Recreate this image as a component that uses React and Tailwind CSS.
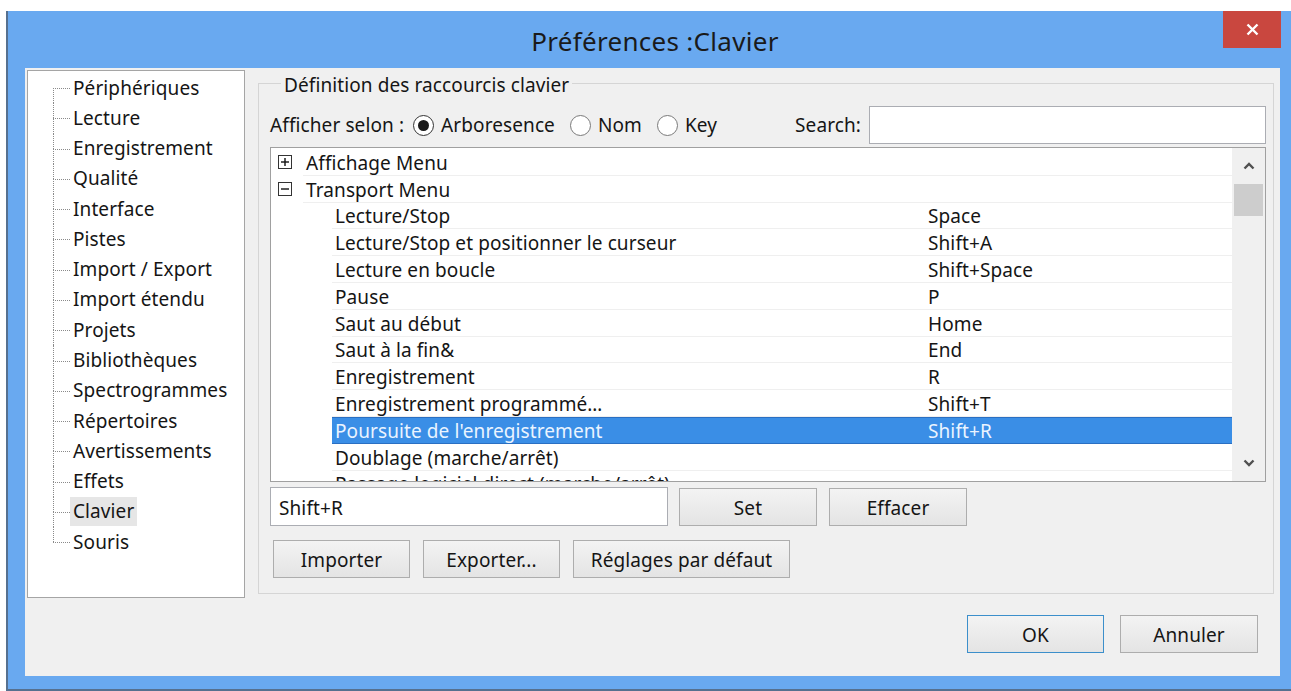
import React from "react";

const sections = [
  "Périphériques",
  "Lecture",
  "Enregistrement",
  "Qualité",
  "Interface",
  "Pistes",
  "Import / Export",
  "Import étendu",
  "Projets",
  "Bibliothèques",
  "Spectrogrammes",
  "Répertoires",
  "Avertissements",
  "Effets",
  "Clavier",
  "Souris",
];

const commands = [
  { type: "group", name: "Affichage Menu", open: false },
  { type: "group", name: "Transport Menu", open: true },
  { name: "Lecture/Stop", key: "Space" },
  { name: "Lecture/Stop et positionner le curseur", key: "Shift+A" },
  { name: "Lecture en boucle", key: "Shift+Space" },
  { name: "Pause", key: "P" },
  { name: "Saut au début", key: "Home" },
  { name: "Saut à la fin&", key: "End" },
  { name: "Enregistrement", key: "R" },
  { name: "Enregistrement programmé…", key: "Shift+T" },
  { name: "Poursuite de l'enregistrement", key: "Shift+R", selected: true },
  { name: "Doublage (marche/arrêt)", key: "" },
  { name: "Passage logiciel direct (marche/arrêt)", key: "" },
];

// expand / collapse box of the command tree
const ToggleBox = ({ open }) => (
  <svg width="14" height="14" viewBox="0 0 14 14" className="shrink-0">
    <rect x="0.5" y="0.5" width="13" height="13" fill="white" stroke="#333" />
    <line x1="3" y1="7" x2="11" y2="7" stroke="#111" strokeWidth="1.4" />
    {!open && <line x1="7" y1="3" x2="7" y2="11" stroke="#111" strokeWidth="1.4" />}
  </svg>
);

const Radio = ({ checked, label }) => (
  <label className="flex items-center gap-[7px]">
    <span
      className={
        "w-[21px] h-[21px] rounded-full border bg-white flex items-center justify-center " +
        (checked ? "border-[#333]" : "border-[#7a7a7a]")
      }
    >
      {checked && <span className="w-[11px] h-[11px] rounded-full bg-[#1a1a1a]" />}
    </span>
    <span>{label}</span>
  </label>
);

const Button = ({ children, className = "", focused = false }) => (
  <button
    className={
      "h-[38px] pt-[3px] border bg-gradient-to-b from-[#f3f3f3] to-[#e4e4e4] text-[#151515] " +
      (focused ? "border-[#3c8fcb] " : "border-[#adadad] ") +
      className
    }
  >
    {children}
  </button>
);

const Chevron = ({ down }) => (
  <svg width="12" height="8" viewBox="0 0 12 8">
    <path
      d={down ? "M1.5 1.5 L6 6 L10.5 1.5" : "M1.5 6.5 L6 2 L10.5 6.5"}
      fill="none"
      stroke="#505050"
      strokeWidth="2.4"
    />
  </svg>
);

export default function App() {
  return (
    <div className="h-[691px] overflow-hidden bg-white pt-[11px] pl-[6px] font-['Noto_Sans',sans-serif] text-[19px] tracking-[0.1px] leading-none text-[#151515]">
      <div className="w-[1290px] h-[680px] flex flex-col bg-[#69a9f0] border-l-2 border-b-2 border-[#56708f]">
        {/* Title bar */}
        <div className="relative h-[57px] shrink-0 flex items-center justify-center pl-[6px] pt-[2px]">
          <span className="text-[26px] tracking-[0.3px] text-[#1a1a1a]">Préférences :Clavier</span>
          <button className="absolute top-0 right-[15px] w-[58px] h-[37px] bg-[#c9473f] flex items-center justify-center">
            <svg width="13" height="13" viewBox="0 0 13 13">
              <path d="M1.5 1.5 L11.5 11.5 M11.5 1.5 L1.5 11.5" stroke="white" strokeWidth="2.4" />
            </svg>
          </button>
        </div>

        {/* Client area */}
        <div className="ml-[17px] w-[1255px] h-[608px] bg-[#f0f0f0] flex flex-col">
          <div className="flex items-start pt-[2px] pl-[2px]">
            {/* Section tree */}
            <div className="w-[218px] h-[528px] bg-white border border-[#a5a5a5] pt-[2px] pl-[25px]">
              {sections.map((s, i) => (
                <div key={s} className="flex h-[30.27px] items-stretch">
                  <div className="w-[17px] flex flex-col">
                    <div className={"h-1/2 " + (i > 0 ? "border-l border-dotted border-[#8a8a8a]" : "")} />
                    <div
                      className={
                        "h-1/2 border-t border-dotted border-[#8a8a8a] " +
                        (i < sections.length - 1 ? "border-l" : "")
                      }
                    />
                  </div>
                  <div className="flex items-center">
                    <span
                      className={
                        "px-[3px] h-[29px] flex items-center " + (s === "Clavier" ? "bg-[#e6e6e6]" : "")
                      }
                    >
                      {s}
                    </span>
                  </div>
                </div>
              ))}
            </div>

            {/* Shortcut editor */}
            <fieldset className="ml-[13px] w-[1016px] h-[524px] border border-[#d5d5d5] pl-[11px] pr-[7px] pt-[9px]">
              <legend className="ml-[11px] px-[3px] pt-[4px] leading-[23px]">Définition des raccourcis clavier</legend>

              <div className="flex items-center justify-between h-[38px]">
                <div className="flex items-center gap-[15px]">
                  <span className="mr-[-6px]">Afficher selon :</span>
                  <Radio checked label="Arboresence" />
                  <Radio label="Nom" />
                  <Radio label="Key" />
                </div>
                <div className="flex items-center gap-[8px]">
                  <span>Search:</span>
                  <div className="w-[397px] h-[38px] bg-white border border-[#abadb3]" />
                </div>
              </div>

              <div className="mt-[3px] h-[335px] flex border border-[#a0a0a0] bg-white">
                <div className="flex-1 overflow-hidden pt-[1px]">
                  {commands.map((c) =>
                    c.type === "group" ? (
                      <div key={c.name} className="flex items-center h-[26.8px] pl-[7px]">
                        <ToggleBox open={c.open} />
                        <div className="flex-1 h-full ml-[11px] pl-[3px] pt-[3px] flex items-center border-b border-[#efefef]">
                          {c.name}
                        </div>
                      </div>
                    ) : (
                      <div key={c.name} className="flex h-[26.8px] pl-[61px]">
                        <div
                          className={
                            "flex-1 flex items-center pt-[3px] " +
                            (c.selected
                              ? "bg-[#3a8ee6] text-[#eaf4ff] border-y border-[#2a6fc2]"
                              : "border-b border-[#efefef]")
                          }
                        >
                          <span className="w-[596px] pl-[3px]">{c.name}</span>
                          <span>{c.key}</span>
                        </div>
                      </div>
                    )
                  )}
                </div>
                <div className="w-[33px] bg-[#f0f0f0] flex flex-col items-center">
                  <div className="h-[36px] flex items-center justify-center">
                    <Chevron />
                  </div>
                  <div className="w-[29px] h-[32px] bg-[#cdcdcd]" />
                  <div className="flex-1" />
                  <div className="h-[36px] flex items-center justify-center">
                    <Chevron down />
                  </div>
                </div>
              </div>

              <div className="mt-[5px] flex items-center">
                <div className="w-[398px] h-[39px] bg-white border border-[#abadb3] flex items-center pl-[8px] pt-[3px]">
                  Shift+R
                </div>
                <Button className="ml-[11px] w-[138px]">Set</Button>
                <Button className="ml-[12px] w-[138px]">Effacer</Button>
              </div>

              <div className="mt-[14px] flex items-center gap-[13px] pl-[3px]">
                <Button className="w-[137px]">Importer</Button>
                <Button className="w-[137px]">Exporter...</Button>
                <Button className="w-[217px]">Réglages par défaut</Button>
              </div>
            </fieldset>
          </div>

          {/* Dialog buttons */}
          <div className="mt-auto mb-[23px] mr-[22px] flex justify-end gap-[16px]">
            <Button focused className="w-[137px]">OK</Button>
            <Button className="w-[138px]">Annuler</Button>
          </div>
        </div>
      </div>
    </div>
  );
}
